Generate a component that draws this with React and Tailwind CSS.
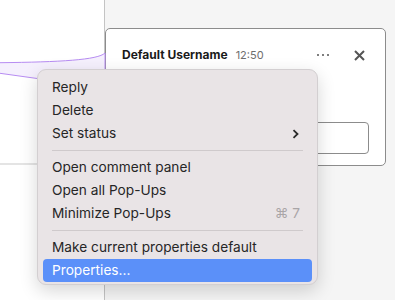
const items = [
  [{ t: 'Reply' }, { t: 'Delete' }, { t: 'Set status', sub: true }],
  [{ t: 'Open comment panel' }, { t: 'Open all Pop-Ups' }, { t: 'Minimize Pop-Ups', key: '⌘ 7' }],
  [{ t: 'Make current properties default' }, { t: 'Properties...', active: true }],
]

function Menu() {
  return (
    <div className="absolute left-[37px] top-[69px] w-[281px] rounded-[9px] border border-[#d3cfd1] bg-[#e9e4e6] px-[5px] pb-[2px] pt-[6px] shadow-[0_6px_18px_rgba(0,0,0,0.16)]">
      {items.map((group, gi) => (
        <div key={gi}>
          {gi > 0 && <div className="mx-[9px] my-[5px] h-px bg-[#cfcacc]" />}
          {group.map((it) => (
            <div key={it.t}
              className={`flex h-[23px] items-center justify-between rounded-[4px] px-[9px] text-[13.7px] ${it.active ? 'bg-[#5b90f9] text-white' : 'text-[#262626]'}`}>
              <span>{it.t}</span>
              {it.sub && (
                <svg width="7" height="10" viewBox="0 0 7 10" className="mr-[4px]">
                  <path d="M1.5 1.2 L5.5 5 L1.5 8.8" fill="none" stroke="#2a2a2a" strokeWidth="1.8" />
                </svg>
              )}
              {it.key && <span className="mr-[3px] text-[#a9a5a7]">{it.key}</span>}
            </div>
          ))}
        </div>
      ))}
    </div>
  )
}

export default function App() {
  return (
    <div className="relative flex h-[300px] w-[395px] overflow-hidden font-['Inter',sans-serif]">
      <div className="relative w-[105px] border-r border-[#c4c4c4] bg-white">
        <div className="mt-[163px] h-[2px] bg-[#e4e4e4]" />
      </div>
      <div className="flex-1 bg-[#f5f5f5]">
        <div className="mt-[28px] h-[138px] w-[281px] rounded-[5px] border border-[#8c8c8c] bg-white px-[16px] pt-[17px]">
          <div className="flex items-center">
            <span className="text-[12px] font-bold text-[#1a1a1a]">Default Username</span>
            <span className="ml-[8px] text-[11px] text-[#6e6e6e]">12:50</span>
            <span className="ml-auto flex gap-[3px] pr-[4px]">
              <i className="h-[2px] w-[2px] rounded-full bg-[#555]" />
              <i className="h-[2px] w-[2px] rounded-full bg-[#555]" />
              <i className="h-[2px] w-[2px] rounded-full bg-[#555]" />
            </span>
            <svg width="11" height="11" viewBox="0 0 11 11" className="ml-[21px] mr-[4px]">
              <path d="M1 1 L10 10 M10 1 L1 10" stroke="#555" strokeWidth="2" />
            </svg>
          </div>
          <div className="mt-[58px] h-[32px] rounded-[4px] border border-[#8c8c8c]" />
        </div>
      </div>
      <svg className="absolute left-0 top-0" width="108" height="100" viewBox="0 0 108 100">
        <path d="M0 62.7 C60 62 98 60 105 53 L105 88 L0 73.3 Z" fill="#f5f0fd" />
        <path d="M0 62.7 C60 62 98 60 105 53" fill="none" stroke="#b78cf2" strokeWidth="1" />
        <path d="M0 73.3 L105 88" fill="none" stroke="#b78cf2" strokeWidth="1" />
        <path d="M105 53 L105 90" fill="none" stroke="#b78cf2" strokeWidth="1" />
      </svg>
      <Menu />
    </div>
  )
}
